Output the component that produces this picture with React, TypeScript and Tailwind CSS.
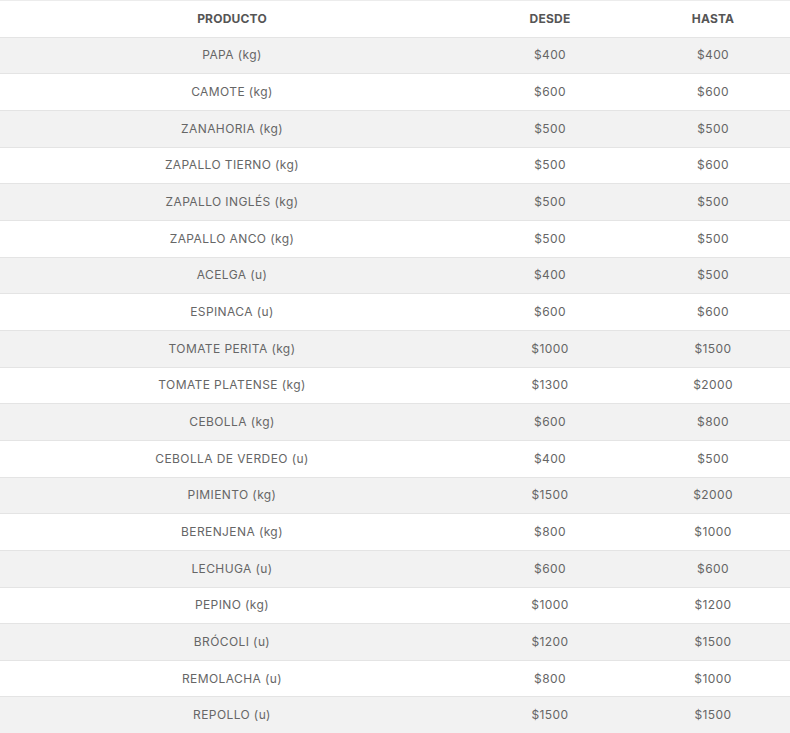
const rows: [string, string, string][] = [
  ['PAPA (kg)', '$400', '$400'],
  ['CAMOTE (kg)', '$600', '$600'],
  ['ZANAHORIA (kg)', '$500', '$500'],
  ['ZAPALLO TIERNO (kg)', '$500', '$600'],
  ['ZAPALLO INGLÉS (kg)', '$500', '$500'],
  ['ZAPALLO ANCO (kg)', '$500', '$500'],
  ['ACELGA (u)', '$400', '$500'],
  ['ESPINACA (u)', '$600', '$600'],
  ['TOMATE PERITA (kg)', '$1000', '$1500'],
  ['TOMATE PLATENSE (kg)', '$1300', '$2000'],
  ['CEBOLLA (kg)', '$600', '$800'],
  ['CEBOLLA DE VERDEO (u)', '$400', '$500'],
  ['PIMIENTO (kg)', '$1500', '$2000'],
  ['BERENJENA (kg)', '$800', '$1000'],
  ['LECHUGA (u)', '$600', '$600'],
  ['PEPINO (kg)', '$1000', '$1200'],
  ['BRÓCOLI (u)', '$1200', '$1500'],
  ['REMOLACHA (u)', '$800', '$1000'],
  ['REPOLLO (u)', '$1500', '$1500'],
]

export default function App() {
  return (
    <div className="w-[790px] bg-white font-['Inter',sans-serif] text-[12px] tracking-[0.4px]">
      <div className="grid h-[36.67px] grid-cols-[464px_172px_154px] items-center border-t border-[#ececec] font-bold tracking-[0.2px] text-[#555]">
        <div className="text-center">PRODUCTO</div>
        <div className="text-center">DESDE</div>
        <div className="text-center">HASTA</div>
      </div>
      {rows.map(([name, from, to], i) => (
        <div
          key={name}
          className={`grid h-[36.67px] grid-cols-[464px_172px_154px] items-center border-t border-[#e4e4e4] text-[#666] ${
            i % 2 === 0 ? 'bg-[#f2f2f2]' : 'bg-white'
          }`}
        >
          <div className="text-center">{name}</div>
          <div className="text-center">{from}</div>
          <div className="text-center">{to}</div>
        </div>
      ))}
    </div>
  )
}
